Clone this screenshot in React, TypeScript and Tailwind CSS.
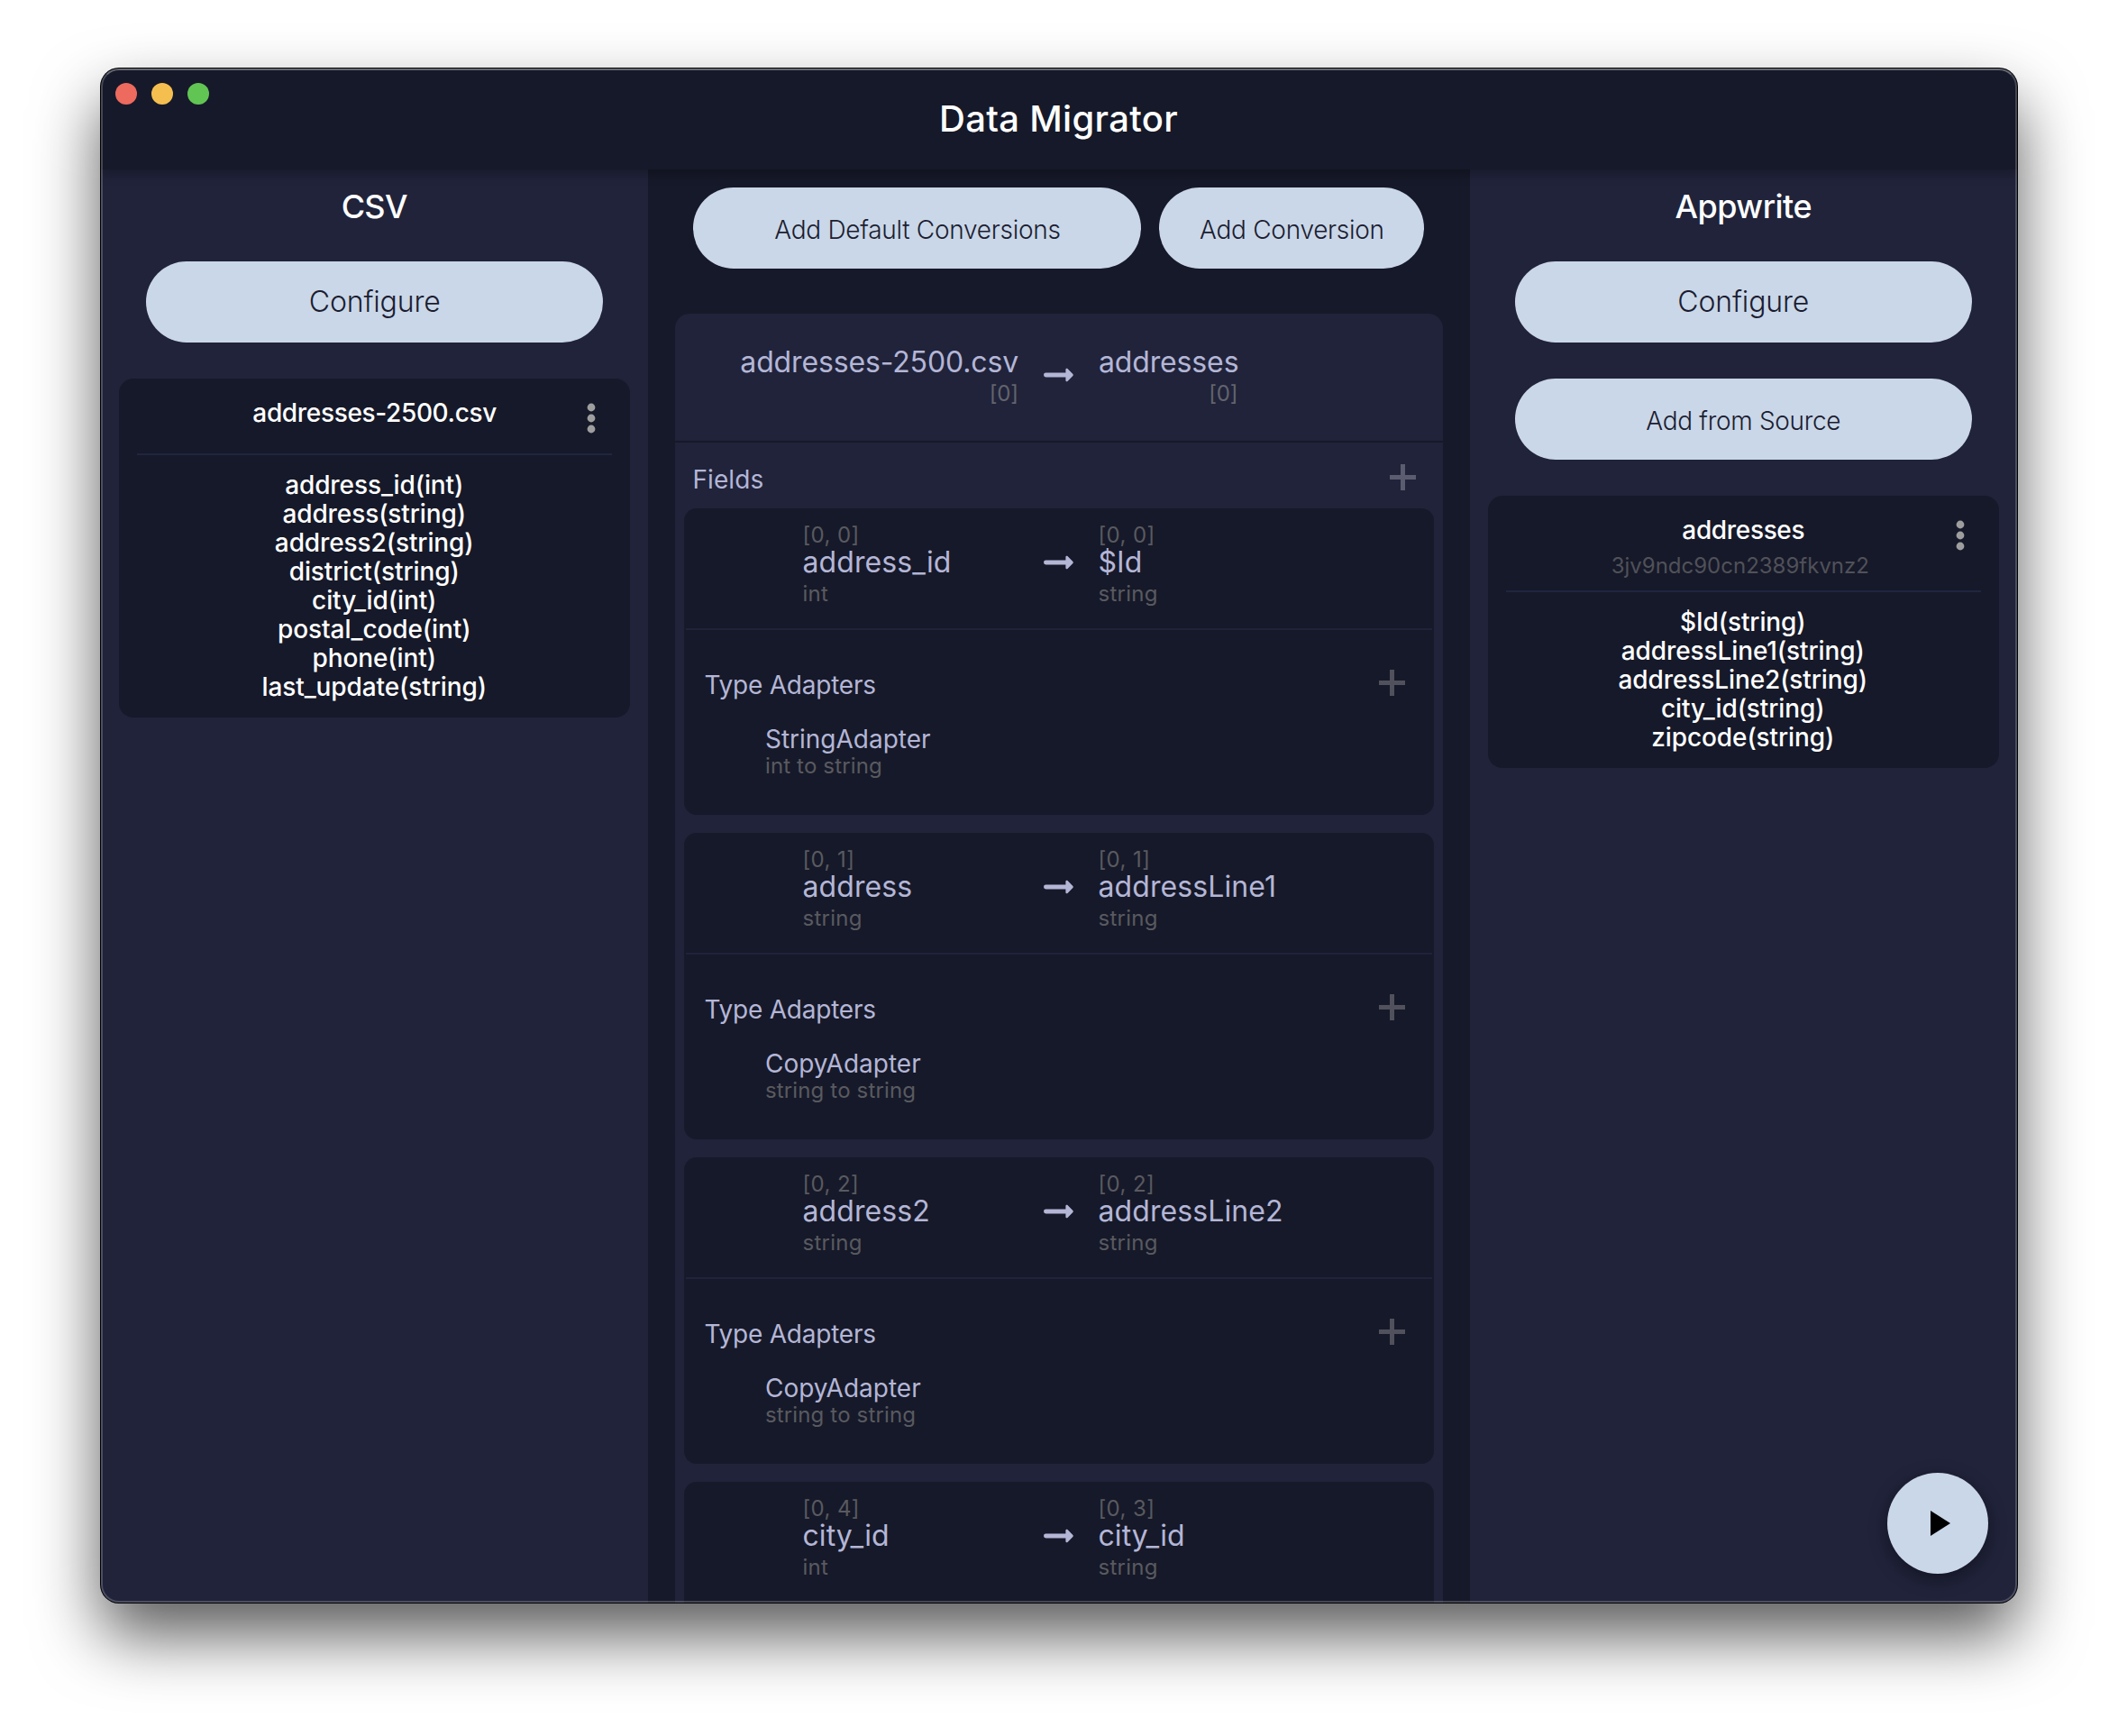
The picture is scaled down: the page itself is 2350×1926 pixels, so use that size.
import type { ReactNode } from "react";

type Endpoint = { index: string; name: string; type: string };
type FieldConversion = {
  from: Endpoint;
  to: Endpoint;
  adapter: { name: string; detail: string };
};

const conversions: FieldConversion[] = [
  {
    from: { index: "[0, 0]", name: "address_id", type: "int" },
    to: { index: "[0, 0]", name: "$Id", type: "string" },
    adapter: { name: "StringAdapter", detail: "int to string" },
  },
  {
    from: { index: "[0, 1]", name: "address", type: "string" },
    to: { index: "[0, 1]", name: "addressLine1", type: "string" },
    adapter: { name: "CopyAdapter", detail: "string to string" },
  },
  {
    from: { index: "[0, 2]", name: "address2", type: "string" },
    to: { index: "[0, 2]", name: "addressLine2", type: "string" },
    adapter: { name: "CopyAdapter", detail: "string to string" },
  },
];

const lastConversion: Pick<FieldConversion, "from" | "to"> = {
  from: { index: "[0, 4]", name: "city_id", type: "int" },
  to: { index: "[0, 3]", name: "city_id", type: "string" },
};

function Arrow() {
  return (
    <svg width="33" height="16" viewBox="0 0 33 16" className="block" fill="#b4b6d6">
      <path d="M2.4 5.6h22V2c0-1.2 1.3-1.7 2.1-.9l5.9 5.9c.5.6.5 1.4 0 2l-5.9 5.9c-.8.8-2.1.3-2.1-.9v-3.6h-22a2.4 2.4 0 0 1 0-4.8z" />
    </svg>
  );
}

function Plus({ className }: { className: string }) {
  return (
    <svg width="29" height="29" viewBox="0 0 29 29" className={className} fill="currentColor">
      <path d="M12 0h5v12h12v5H17v12h-5V17H0v-5h12z" />
    </svg>
  );
}

function MenuDots() {
  return (
    <svg width="48" height="48" viewBox="0 0 48 48" className="block" fill="#9e9e9f">
      <circle cx="24" cy="12" r="4.4" />
      <circle cx="24" cy="24" r="4.4" />
      <circle cx="24" cy="36" r="4.4" />
    </svg>
  );
}

function Pill({ className, children }: { className: string; children: ReactNode }) {
  return (
    <button
      className={`flex h-[90px] items-center justify-center rounded-full bg-[#cad7e8] font-light text-[#1b1d31] ${className}`}
    >
      {children}
    </button>
  );
}

function CollectionCard({ name, id, fields }: { name: string; id?: string; fields: string[] }) {
  return (
    <section className="relative mx-5 mt-10 rounded-[16px] bg-[#161929] px-5 pb-[18px] pt-[22px] text-center text-[28px] font-[450] leading-8">
      <h3 className="tracking-[-0.34px]">{name}</h3>
      {id ? (
        <p className="mt-2 pr-[7px] text-[24px] font-normal leading-8 text-[#505159]">{id}</p>
      ) : (
        <div className="h-[29px]" />
      )}
      <div className="absolute right-[19px] top-5">
        <MenuDots />
      </div>
      <hr className={`h-0.5 border-0 bg-[#20263f] ${id ? "mt-[11px]" : ""}`} />
      <ul className="pr-px pt-[17px] tracking-[-0.1px]">
        {fields.map((field) => (
          <li key={field}>{field}</li>
        ))}
      </ul>
    </section>
  );
}

function FieldEnd({ index, name, type }: Endpoint) {
  return (
    <div>
      <p className="text-[24px] leading-[31px] tracking-[0.4px] text-[#595a60]">{index}</p>
      <p className="text-[32px] leading-[30px] tracking-[0.1px] text-[#b4b6d6]">{name}</p>
      <p className="mt-[5px] text-[24px] leading-[30px] tracking-[0.3px] text-[#595a60]">{type}</p>
    </div>
  );
}

function FieldMapping({ from, to }: Pick<FieldConversion, "from" | "to">) {
  return (
    <div className="grid h-[133px] grid-cols-[240px_88px_1fr] pl-[131px] pt-[14px]">
      <FieldEnd {...from} />
      <div className="mt-[30px] flex h-[31px] items-center pl-7">
        <Arrow />
      </div>
      <FieldEnd {...to} />
    </div>
  );
}

function FieldCard({ from, to, adapter }: FieldConversion) {
  return (
    <article className="h-[340px] shrink-0 rounded-[14px] bg-[#161929]">
      <FieldMapping from={from} to={to} />
      <hr className="mx-0.5 h-0.5 border-0 bg-[#20233a]" />
      <div className="mt-[38px] flex h-10 items-center justify-between pl-[22px] pr-8">
        <h4 className="pt-[5px] text-[28px] leading-8 tracking-[-0.22px] text-[#b4b6d6]">Type Adapters</h4>
        <Plus className="block text-[#50515c]" />
      </div>
      <div className="mt-[27px] pl-[89.5px]">
        <p className="text-[28px] leading-8 text-[#b4b6d6]">{adapter.name}</p>
        <p className="text-[24px] leading-[27px] tracking-[0.15px] text-[#595a60]">{adapter.detail}</p>
      </div>
    </article>
  );
}

export default function App() {
  return (
    <div className="h-[1926px] w-[2350px] overflow-hidden bg-white pl-[112px] pt-[76px] font-[Inter,sans-serif]">
      <div className="relative flex h-[1702px] w-[2126px] flex-col overflow-hidden rounded-[20px] bg-[#161929] text-white shadow-[0_0_0_1px_#000,0_36px_72px_rgba(0,0,0,0.65)]">
        <header className="relative z-10 flex h-28 shrink-0 items-center justify-center bg-[#161929] shadow-[0_4px_12px_rgba(0,0,0,0.3)]">
          <div className="absolute left-4 top-4 flex gap-4">
            <span className="size-6 rounded-full bg-[#ed6a5e]" />
            <span className="size-6 rounded-full bg-[#f5bf4f]" />
            <span className="size-6 rounded-full bg-[#61c554]" />
          </div>
          <h1 className="pr-px text-[40px] font-medium leading-none tracking-[0.3px]">Data Migrator</h1>
        </header>

        <main className="grid min-h-0 flex-1 grid-cols-[2fr_3fr_2fr]">
          <aside className="flex flex-col bg-[#20233a] pt-5">
            <h2 className="pr-px text-center text-[36px] font-[450] leading-[42px] tracking-[-0.7px]">CSV</h2>
            <Pill className="mx-[50px] mt-10 text-[32px] tracking-[-0.15px]">Configure</Pill>
            <CollectionCard
              name="addresses-2500.csv"
              fields={[
                "address_id(int)",
                "address(string)",
                "address2(string)",
                "district(string)",
                "city_id(int)",
                "postal_code(int)",
                "phone(int)",
                "last_update(string)",
              ]}
            />
          </aside>

          <section className="flex min-h-0 flex-col px-[30px] pt-5">
            <div className="flex shrink-0 gap-5 px-5">
              <Pill className="w-[497px] pt-[3px] text-[28px] tracking-[-0.28px]">Add Default Conversions</Pill>
              <Pill className="w-[294px] pt-[3px] text-[28px] tracking-[-0.28px]">Add Conversion</Pill>
            </div>
            <div className="mt-[50px] flex min-h-0 flex-1 flex-col rounded-t-[16px] bg-[#20233a]">
              <div className="grid h-[141px] shrink-0 grid-cols-[1fr_88px_1fr] pt-[34px] text-[32px] leading-10 tracking-[-0.14px] text-[#b4b6d6]">
                <div className="pr-px text-right">
                  <p>addresses-2500.csv</p>
                  <p className="text-[24px] leading-[29px] text-[#63646d]">[0]</p>
                </div>
                <div className="mt-[26px] pl-[27px]">
                  <Arrow />
                </div>
                <div className="w-fit text-right">
                  <p>addresses</p>
                  <p className="pr-px text-[24px] leading-[29px] text-[#63646d]">[0]</p>
                </div>
              </div>
              <hr className="h-0.5 shrink-0 border-0 bg-[#161929]" />
              <div className="flex h-[73px] shrink-0 items-center justify-between pl-[19px] pr-[30px] pt-1">
                <h3 className="pt-1 text-[28px] leading-8 tracking-[0.1px] text-[#b4b6d6]">Fields</h3>
                <Plus className="block text-[#5b5c70]" />
              </div>
              <div className="flex flex-col gap-5 px-2.5">
                {conversions.map((conversion, i) => (
                  <FieldCard key={i} {...conversion} />
                ))}
                <article className="h-[134px] shrink-0 rounded-t-[14px] bg-[#161929]">
                  <FieldMapping {...lastConversion} />
                </article>
              </div>
            </div>
          </section>

          <aside className="flex flex-col bg-[#20233a] pt-5">
            <h2 className="text-center text-[36px] font-[450] leading-[42px] tracking-[-0.5px]">Appwrite</h2>
            <Pill className="mx-[50px] mt-10 text-[32px] tracking-[-0.15px]">Configure</Pill>
            <Pill className="mx-[50px] mt-10 pt-[3px] text-[28px] tracking-[-0.32px]">Add from Source</Pill>
            <CollectionCard
              name="addresses"
              id="3jv9ndc90cn2389fkvnz2"
              fields={[
                "$Id(string)",
                "addressLine1(string)",
                "addressLine2(string)",
                "city_id(string)",
                "zipcode(string)",
              ]}
            />
          </aside>
        </main>

        <button className="absolute bottom-8 right-8 z-20 flex size-28 items-center justify-center rounded-full bg-[#cad7e8] shadow-[0_6px_20px_rgba(0,0,0,0.4)]">
          <svg width="48" height="48" viewBox="0 0 24 24" fill="#000">
            <path d="M8 5v14l11-7z" />
          </svg>
        </button>

        <div className="pointer-events-none absolute inset-0 z-30 rounded-[20px] border-2 border-white/20 border-t-white/35" />
      </div>
    </div>
  );
}
